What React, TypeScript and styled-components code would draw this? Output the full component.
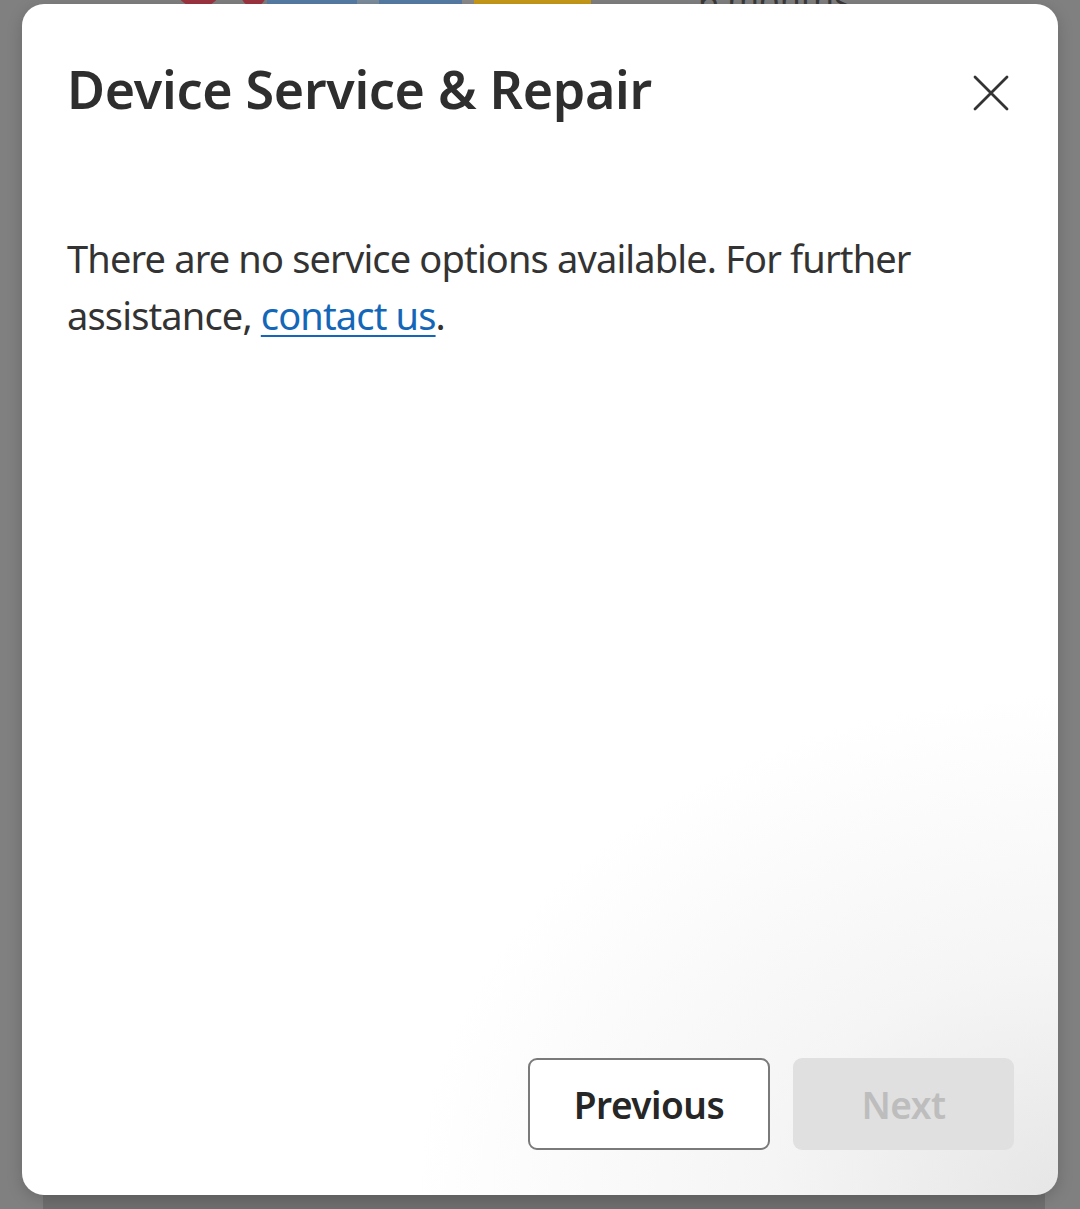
import React from 'react';
import styled, { createGlobalStyle } from 'styled-components';

const GlobalStyle = createGlobalStyle`
  html, body {
    margin: 0;
    padding: 0;
    background: #808080;
  }
  * {
    box-sizing: border-box;
  }
`;

const Screen = styled.div`
  position: relative;
  width: 1080px;
  height: 1209px;
  overflow: hidden;
  background: #808080;
  font-family: 'Noto Sans', 'Open Sans', Arial, sans-serif;
`;

/* page that sits behind the modal, dimmed */
const BehindPage = styled.div`
  display: flex;
  flex-direction: column;
  height: 100%;
`;

const PeekRow = styled.div`
  display: flex;
  align-items: flex-end;
  height: 40px;
  margin-top: -34px;
  padding-left: 177px;
`;

const Blob = styled.div<{ $w: number; $c: string; $round?: boolean; $ml?: number }>`
  width: ${(p) => p.$w}px;
  height: 40px;
  margin-left: ${(p) => p.$ml ?? 0}px;
  background: ${(p) => p.$c};
  border-radius: ${(p) => (p.$round ? '0 0 40% 40%' : '0')};
`;

const PeekText = styled.div`
  margin-left: 108px;
  font-size: 34px;
  line-height: 40px;
  color: #3a3a3a;
  transform: translateY(14px);
`;

const Spacer = styled.div`
  flex: 1;
`;

const BehindCard = styled.div`
  height: 20px;
  margin: 0 35px 0 43px;
  background: #6f6f6f;
`;

const Dialog = styled.div`
  position: absolute;
  top: 4px;
  left: 22px;
  width: 1036px;
  height: 1191px;
  border-radius: 22px;
  background: radial-gradient(ellipse 62% 42% at 100% 100%, #e6e6e6 0%, #f5f5f5 45%, #ffffff 100%);
  box-shadow: 0 4px 16px rgba(0, 0, 0, 0.18);
  display: flex;
  flex-direction: column;
  padding: 53px 44px 45px 45px;
`;

const Header = styled.div`
  display: flex;
  justify-content: space-between;
  align-items: flex-start;
`;

const Title = styled.h1`
  margin: 0;
  font-size: 52px;
  line-height: 64px;
  font-weight: 600;
  color: #2e2e2e;
  letter-spacing: -0.3px;
`;

const CloseButton = styled.button`
  width: 46px;
  height: 46px;
  margin-top: 13px;
  padding: 0;
  border: none;
  background: transparent;
  display: flex;
  align-items: center;
  justify-content: center;
  cursor: pointer;
`;

const Message = styled.p`
  margin: 109px 0 0;
  font-size: 38px;
  line-height: 57px;
  letter-spacing: -0.85px;
  color: #333333;
  max-width: 900px;
`;

const Link = styled.a`
  color: #1467b8;
  text-decoration: underline;
  text-underline-offset: 5px;
  text-decoration-thickness: 2px;
`;

const Footer = styled.div`
  margin-top: auto;
  display: flex;
  justify-content: flex-end;
  gap: 23px;
`;

const Button = styled.button<{ $w: number; $disabled?: boolean }>`
  width: ${(p) => p.$w}px;
  height: 92px;
  border-radius: 9px;
  font-family: inherit;
  font-size: 37px;
  font-weight: 600;
  letter-spacing: -0.5px;
  border: ${(p) => (p.$disabled ? 'none' : '2px solid #7a7a7a')};
  background: ${(p) => (p.$disabled ? '#e0e0e0' : '#ffffff')};
  color: ${(p) => (p.$disabled ? '#bdbdbd' : '#262626')};
  cursor: ${(p) => (p.$disabled ? 'default' : 'pointer')};
`;

const CloseIcon = () => (
  <svg width="46" height="46" viewBox="0 0 46 46" fill="none">
    <path d="M7 7 L39 39 M39 7 L7 39" stroke="#333" strokeWidth="2.8" strokeLinecap="round" />
  </svg>
);

export default function App() {
  return (
    <>
      <GlobalStyle />
      <Screen>
        <BehindPage>
          <PeekRow>
            <Blob $w={43} $c="#9d3440" $round />
            <Blob $w={27} $c="#9d3440" $round $ml={20} />
            <Blob $w={90} $c="#577da6" />
            <Blob $w={22} $c="#7d8d9c" />
            <Blob $w={83} $c="#577da6" />
            <Blob $w={12} $c="#8a8a8a" />
            <Blob $w={117} $c="#c79a18" />
            <PeekText>6 months</PeekText>
          </PeekRow>
          <Spacer />
          <BehindCard />
        </BehindPage>

        <Dialog role="dialog" aria-modal="true">
          <Header>
            <Title>Device Service &amp; Repair</Title>
            <CloseButton aria-label="Close">
              <CloseIcon />
            </CloseButton>
          </Header>
          <Message>
            There are no service options available. For further assistance,{' '}
            <Link href="#">contact us</Link>.
          </Message>
          <Footer>
            <Button $w={242}>Previous</Button>
            <Button $w={221} $disabled disabled>
              Next
            </Button>
          </Footer>
        </Dialog>
      </Screen>
    </>
  );
}
